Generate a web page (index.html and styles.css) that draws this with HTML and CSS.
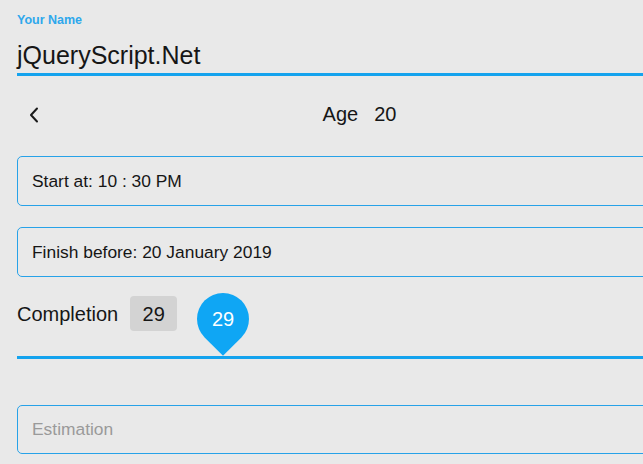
FILE: index.html
```html
<!DOCTYPE html>
<html lang="en">
<head>
<meta charset="utf-8">
<title>Form</title>
<link rel="stylesheet" href="styles.css">
</head>
<body>
<div class="viewport">
<div class="form">
  <label class="field-label">Your Name</label>
  <div class="name-input">jQueryScript.Net</div>

  <div class="stepper">
    <button class="prev" aria-label="Previous">
      <svg width="10" height="16" viewBox="0 0 10 16"><polyline points="8,1.5 2,8 8,14.5" fill="none" stroke="#1a1a1a" stroke-width="2" stroke-linecap="round" stroke-linejoin="round"/></svg>
    </button>
    <div class="stepper-title"><span>Age</span><span>20</span></div>
    <span></span>
  </div>

  <div class="box">Start at: 10 : 30 PM</div>
  <div class="box">Finish before: 20 January 2019</div>

  <div class="completion">
    <span>Completion</span>
    <span class="value">29</span>
  </div>

  <div class="slider">
    <div class="track"></div>
    <div class="pin"><span>29</span></div>
  </div>

  <div class="box placeholder">Estimation</div>
</div>
</div>
</body>
</html>
```

FILE: styles.css
```css
html, body {
  margin: 0;
  padding: 0;
}
body {
  background: #e9e9e9;
  font-family: "Liberation Sans", Arial, sans-serif;
  color: #161616;
}
.viewport {
  width: 643px;
  height: 464px;
  overflow: hidden;
}
.form {
  width: 684px;
  margin-left: 17px;
  padding-top: 13px;
  display: flex;
  flex-direction: column;
}
.field-label {
  font-size: 12.5px;
  font-weight: bold;
  line-height: 15px;
  color: #2ea8ec;
}
.name-input {
  margin-top: 12px;
  font-size: 25px;
  line-height: 30px;
  padding-bottom: 3px;
  border-bottom: 3px solid #14a3ee;
}
.stepper {
  height: 80px;
  display: grid;
  grid-template-columns: 1fr auto 1fr;
  align-items: center;
}
.prev {
  justify-self: start;
  background: none;
  border: 0;
  padding: 0;
  margin-left: 12px;
  margin-top: -3px;
  width: 10px;
  height: 16px;
  display: flex;
}
.stepper-title {
  display: flex;
  gap: 16px;
  font-size: 20px;
  line-height: 24px;
  margin-top: -4px;
  padding-left: 1px;
}
.box {
  box-sizing: border-box;
  height: 50px;
  border: 1px solid #27a2e8;
  border-radius: 5px;
  padding-left: 14px;
  display: flex;
  align-items: center;
  font-size: 17.4px;
}
.box + .box {
  margin-top: 21px;
}
.completion {
  margin-top: 19px;
  display: flex;
  align-items: center;
  gap: 12px;
  font-size: 20px;
  line-height: 24px;
}
.value {
  width: 47px;
  height: 35px;
  display: flex;
  align-items: center;
  justify-content: center;
  background: #d3d3d3;
  border-radius: 4px;
}
.slider {
  position: relative;
  padding-top: 25px;
}
.track {
  height: 3px;
  background: #14a3ee;
}
.pin {
  position: absolute;
  left: 180px;
  top: -38px;
  width: 52px;
  height: 52px;
  display: flex;
  align-items: center;
  justify-content: center;
  color: #fff;
  font-size: 20px;
}
.pin::before {
  content: "";
  position: absolute;
  inset: 0;
  background: #0fa6f4;
  border-radius: 50% 50% 0 50%;
  transform: rotate(45deg);
}
.pin span {
  position: relative;
}
.box.placeholder {
  margin-top: 46px;
  color: #9a9a9a;
  height: 49px;
}
```
